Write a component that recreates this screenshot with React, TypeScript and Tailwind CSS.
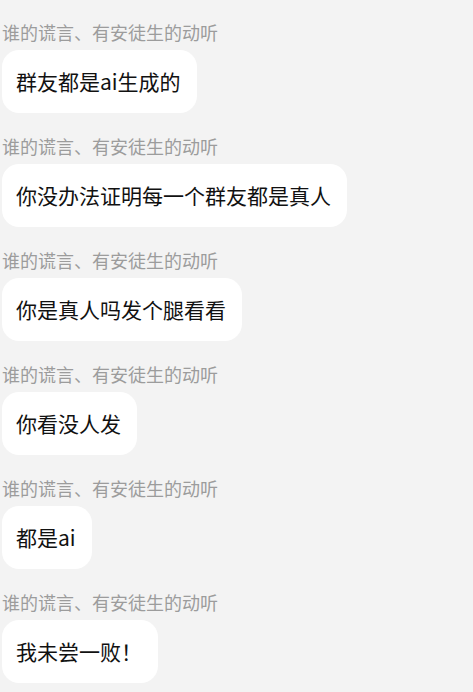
import React from "react";

const messages = [
  "群友都是ai生成的",
  "你没办法证明每一个群友都是真人",
  "你是真人吗发个腿看看",
  "你看没人发",
  "都是ai",
  "我未尝一败！",
];

export default function App() {
  return (
    <div
      className="w-[473px] h-[692px] overflow-hidden bg-[#f3f3f3] pt-[20px] pl-[2px]"
      style={{ fontFamily: '"Microsoft YaHei", "Noto Sans CJK SC", "Noto Sans", sans-serif' }}
    >
      <div className="flex flex-col">
        {messages.map((m, i) => (
          <div key={i} className="flex flex-col items-start h-[114px]">
            <div className="h-[25px] leading-[25px] text-[18px] text-[#9c9c9c] whitespace-nowrap">
              谁的谎言、有安徒生的动听
            </div>
            <div className="mt-[5px] h-[63px] flex items-center rounded-[17px] bg-white pl-[14px] pr-[16px] text-[21px] text-[#111111] whitespace-nowrap">
              {m}
            </div>
          </div>
        ))}
      </div>
    </div>
  );
}
